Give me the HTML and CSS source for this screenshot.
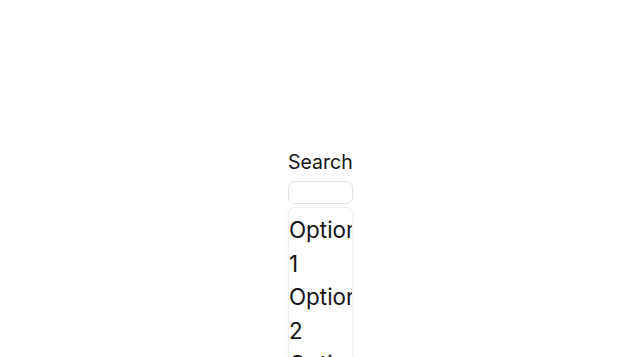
FILE: index.html
```html
<!DOCTYPE html>
<html lang="en">
<head>
<meta charset="utf-8">
<title>Search</title>
<link rel="stylesheet" href="styles.css">
</head>
<body>
<div class="page">
  <div class="combobox">
    <label class="label" for="search">Search</label>
    <input class="input" id="search" type="text">
    <div class="listbox" role="listbox">
      <div class="option" role="option">Option 1</div>
      <div class="option" role="option">Option 2</div>
      <div class="option" role="option">Option 3</div>
      <div class="option" role="option">Option 4</div>
    </div>
  </div>
</div>
</body>
</html>
```
FILE: styles.css
```css
html, body {
  margin: 0;
  padding: 0;
  background: #ffffff;
  font-family: Inter, "Noto Sans", sans-serif;
  color: #141414;
}
.page {
  display: flex;
  justify-content: center;
  padding-top: 150px;
}
.combobox {
  display: flex;
  flex-direction: column;
  width: 65px;
  margin-left: 1px;
}
.label {
  font-size: 19.5px;
  line-height: 24px;
  margin-bottom: 7px;
}
.input {
  box-sizing: border-box;
  width: 100%;
  height: 23px;
  margin: 0;
  padding: 0 6px;
  border: 1px solid #e2e2e2;
  border-radius: 7px;
  background: #fff;
  font: inherit;
  font-size: 14px;
  outline: none;
}
.listbox {
  box-sizing: border-box;
  margin-top: 3px;
  padding: 5px 0 4px;
  border: 1px solid #f0f0f0;
  border-radius: 7px;
  background: #fff;
  box-shadow: 0 2px 6px rgba(0, 0, 0, 0.06);
  overflow: hidden;
}
.option {
  font-size: 22.4px;
  line-height: 33.5px;
  color: #141414;
}
```
